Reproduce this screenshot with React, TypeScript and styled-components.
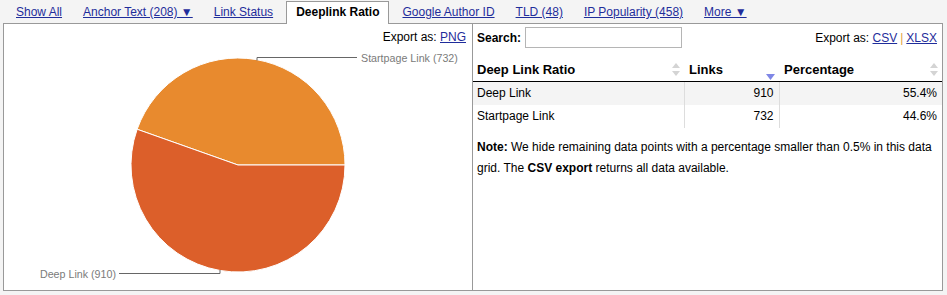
import React from "react";
import styled, { createGlobalStyle } from "styled-components";

const GlobalStyle = createGlobalStyle`
  body {
    margin: 0;
    background: #f4f4f4;
    font-family: "Liberation Sans", Arial, sans-serif;
    color: #000;
  }
`;

const Page = styled.div`
  padding: 0 4px 0 3px;
`;

const TabBar = styled.div`
  display: flex;
  gap: 1px;
  padding: 1px 0 0 3px;
`;

const Tab = styled.div<{ $active?: boolean }>`
  position: relative;
  z-index: 1;
  box-sizing: border-box;
  height: 23px;
  margin: ${(p) => (p.$active ? "0 2px -1px 2px" : "0 0 -1px 0")};
  padding: 0 9px;
  line-height: 20px;
  font-size: 12px;
  white-space: nowrap;
  border: 1px solid ${(p) => (p.$active ? "#999" : "transparent")};
  border-bottom: none;
  background: ${(p) => (p.$active ? "#fff" : "transparent")};
  font-weight: ${(p) => (p.$active ? "bold" : "normal")};
  color: ${(p) => (p.$active ? "#000" : "#1f2d9b")};
  text-decoration: ${(p) => (p.$active ? "none" : "underline")};
`;

const Panel = styled.div`
  box-sizing: border-box;
  height: 268px;
  display: grid;
  grid-template-columns: 469px 1fr;
  background: #fff;
  border: 1px solid #999;
`;

const ChartSide = styled.div`
  border-right: 1px solid #999;
  display: flex;
  flex-direction: column;
`;

const ExportRow = styled.div`
  height: 26px;
  padding: 6px 6px 0 0;
  box-sizing: border-box;
  text-align: right;
  font-size: 12px;
  line-height: 15px;
`;

const Link = styled.a`
  color: #1f2d9b;
  text-decoration: underline;
`;

const Divider = styled.span`
  color: #e0a040;
  margin: 0 3px;
`;

const GridSide = styled.div`
  display: flex;
  flex-direction: column;
`;

const TopBar = styled.div`
  display: flex;
  align-items: center;
  justify-content: space-between;
  height: 21px;
  padding: 3px 5px 0 4px;
  margin-bottom: 10px;
  font-size: 12px;
`;

const SearchLabel = styled.label`
  display: flex;
  align-items: center;
  gap: 4px;
  font-weight: bold;
`;

const SearchInput = styled.input`
  box-sizing: border-box;
  width: 157px;
  height: 21px;
  border: 1px solid #b5b5b5;
  padding: 0 3px;
`;

const Table = styled.table`
  width: 100%;
  border-collapse: collapse;
  table-layout: fixed;
`;

const Th = styled.th<{ $w?: number }>`
  box-sizing: border-box;
  height: 23px;
  padding: 0 4px 0 5px;
  text-align: left;
  font-size: 13px;
  font-weight: bold;
  border-bottom: 1px solid #000;
  width: ${(p) => (p.$w ? `${p.$w}px` : "auto")};
  &:first-child {
    padding-left: 4px;
  }
`;

const HeadInner = styled.div`
  display: flex;
  justify-content: space-between;
  align-items: center;
`;

const SortIcon = styled.svg<{ $low?: boolean }>`
  flex: none;
  align-self: ${(p) => (p.$low ? "flex-end" : "center")};
  margin-bottom: ${(p) => (p.$low ? "-3px" : "0")};
`;

const Row = styled.tr<{ $shade?: boolean }>`
  background: ${(p) => (p.$shade ? "#f4f4f4" : "#fff")};
  & + & td {
    border-top: 1px solid #ddd;
  }
`;

const Td = styled.td<{ $num?: boolean }>`
  height: 23px;
  padding: 0 5px 0 4px;
  font-size: 12px;
  text-align: ${(p) => (p.$num ? "right" : "left")};
  & + & {
    border-left: 1px solid #ddd;
  }
`;

const Note = styled.p`
  margin: 9px 6px 0 4px;
  font-size: 12px;
  line-height: 21.6px;
`;

const cx = 234;
const cy = 115;
const r = 107;
const startShare = 732 / (732 + 910);
const a = startShare * 2 * Math.PI;
const ex = cx + r * Math.cos(a);
const ey = cy - r * Math.sin(a);

function PieChart() {
  return (
    <svg width="468" height="240" viewBox="0 0 468 240">
      <path
        d={`M${cx} ${cy} L${cx + r} ${cy} A${r} ${r} 0 0 0 ${ex} ${ey} Z`}
        fill="#e88a2e"
        stroke="#fff"
        strokeWidth="1"
      />
      <path
        d={`M${cx} ${cy} L${ex} ${ey} A${r} ${r} 0 1 0 ${cx + r} ${cy} Z`}
        fill="#dc5f2a"
        stroke="#fff"
        strokeWidth="1"
      />
      <polyline points="253,10.5 253,7.5 353,7.5" fill="none" stroke="#666" strokeWidth="1" />
      <text x="357" y="11.5" fontSize="10.7" fill="#7a7a7a" fontFamily="Liberation Sans, Arial, sans-serif">
        Startpage Link (732)
      </text>
      <polyline points="115,223.5 216,223.5 216,220" fill="none" stroke="#666" strokeWidth="1" />
      <text x="112" y="227.5" fontSize="10.7" fill="#7a7a7a" textAnchor="end" fontFamily="Liberation Sans, Arial, sans-serif">
        Deep Link (910)
      </text>
    </svg>
  );
}

const BothArrows = () => (
  <SortIcon width="8" height="13" viewBox="0 0 8 13">
    <path d="M4 0 L8 5 L0 5 Z" fill="#d4d4d4" />
    <path d="M0 8 L8 8 L4 13 Z" fill="#d4d4d4" />
  </SortIcon>
);

const DownArrow = () => (
  <SortIcon $low width="9" height="6" viewBox="0 0 9 6">
    <path d="M0 0 L9 0 L4.5 6 Z" fill="#7f87e6" />
  </SortIcon>
);

const tabs = [
  "Show All",
  "Anchor Text (208) ▼",
  "Link Status",
  "Deeplink Ratio",
  "Google Author ID",
  "TLD (48)",
  "IP Popularity (458)",
  "More ▼",
];

const rows = [
  { name: "Deep Link", links: 910, pct: "55.4%" },
  { name: "Startpage Link", links: 732, pct: "44.6%" },
];

export default function App() {
  return (
    <Page>
      <GlobalStyle />
      <TabBar>
        {tabs.map((t) => (
          <Tab key={t} $active={t === "Deeplink Ratio"}>
            {t}
          </Tab>
        ))}
      </TabBar>
      <Panel>
        <ChartSide>
          <ExportRow>
            Export as: <Link>PNG</Link>
          </ExportRow>
          <PieChart />
        </ChartSide>
        <GridSide>
          <TopBar>
            <SearchLabel>
              Search: <SearchInput type="text" />
            </SearchLabel>
            <span>
              Export as: <Link>CSV</Link>
              <Divider>|</Divider>
              <Link>XLSX</Link>
            </span>
          </TopBar>
          <Table>
            <thead>
              <tr>
                <Th $w={211}>
                  <HeadInner>
                    Deep Link Ratio <BothArrows />
                  </HeadInner>
                </Th>
                <Th $w={95}>
                  <HeadInner>
                    Links <DownArrow />
                  </HeadInner>
                </Th>
                <Th>
                  <HeadInner>
                    Percentage <BothArrows />
                  </HeadInner>
                </Th>
              </tr>
            </thead>
            <tbody>
              {rows.map((row, i) => (
                <Row key={row.name} $shade={i === 0}>
                  <Td>{row.name}</Td>
                  <Td $num>{row.links}</Td>
                  <Td $num>{row.pct}</Td>
                </Row>
              ))}
            </tbody>
          </Table>
          <Note>
            <b>Note:</b> We hide remaining data points with a percentage smaller than 0.5% in this data
            grid. The <b>CSV export</b> returns all data available.
          </Note>
        </GridSide>
      </Panel>
    </Page>
  );
}
